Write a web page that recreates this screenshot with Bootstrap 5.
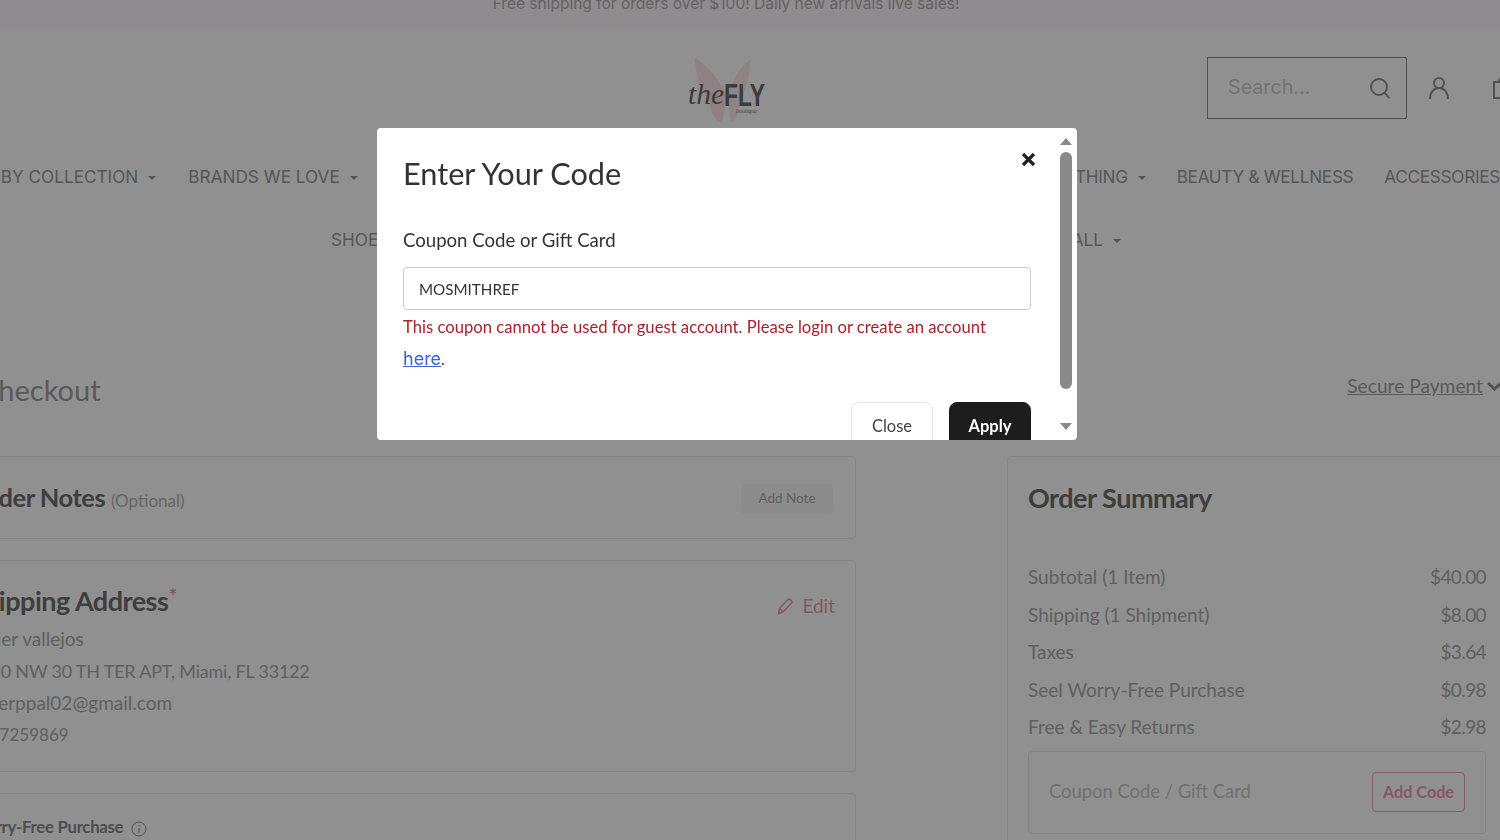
<!DOCTYPE html>
<html lang="en">
<head>
    <meta charset="UTF-8">
    <meta name="viewport" content="width=device-width, initial-scale=1.0">
    <title>Checkout</title>
    <link href="https://cdn.jsdelivr.net/npm/bootstrap@5.3.0/dist/css/bootstrap.min.css" rel="stylesheet">
    <style>
        html, body {
            height: 840px;
            overflow: hidden;
        }
        body {
            background-color: #fff;
            color: #333;
            font-family: "Lato", "Liberation Sans", sans-serif;
        }
        .promo-bar {
            height: 30px;
            background-color: #fff7fc;
            font-family: "Inter", sans-serif;
            font-size: 15.5px;
            line-height: 20px;
            color: #b0b0b0;
        }
        .promo-bar span {
            margin-top: -6px;
            margin-left: -48px;
        }
        .top-wrap {
            margin-left: -240px;
            width: 1932px;
        }
        .head-grid {
            display: grid;
            grid-template-columns: 1fr 100px 1fr;
            grid-template-rows: 62px;
            padding-top: 27px;
            height: 89px;
        }
        .brand-logo {
            width: 100px;
            height: 72px;
        }
        .head-tools {
            padding-left: 431px;
        }
        .search-box {
            width: 200px;
            height: 62px;
            border: 1px solid #909090;
            padding: 0 15px 0 20px;
            font-family: "Inter", sans-serif;
            font-size: 19.7px;
            color: #ccc;
        }
        .tool-icon {
            margin-left: 21px;
        }
        .bag-icon {
            margin-left: 41px;
        }
        .nav-line {
            font-family: "Inter", sans-serif;
            font-size: 17.2px;
            line-height: 27px;
            color: #9a9a9a;
            white-space: nowrap;
        }
        .nav-one {
            width: 1556px;
            margin: 44px auto 0;
        }
        .nav-left {
            gap: 32px;
        }
        .nav-right {
            gap: 31px;
            letter-spacing: -.3px;
            margin-right: 4px;
        }
        .nav-two {
            width: 790px;
            margin: 36px auto 0;
        }
        .nav-caret::after {
            content: "";
            display: inline-block;
            margin-left: 10px;
            vertical-align: 3px;
            border-top: 4px solid #9a9a9a;
            border-left: 4px solid transparent;
            border-right: 4px solid transparent;
        }
        .check-wrap {
            margin-left: -49px;
            width: 1556px;
        }
        .title-row {
            height: 83px;
            margin-top: 120px;
        }
        .check-title {
            font-size: 29px;
            font-weight: 400;
            color: #a0a0a0;
            margin: 0 0 0 28px;
            line-height: 40px;
            position: relative;
            top: -3px;
        }
        .secure-link {
            color: #a0a0a0;
            font-size: 19.2px;
            line-height: 26px;
            margin-right: 5px;
        }
        .left-col {
            width: 905px;
        }
        .right-col {
            width: 500px;
            margin-left: 151px;
        }
        .pane {
            border: 1px solid #ececec;
            border-radius: 4px;
            padding: 0 22px 0 18px;
            background-color: #fff;
        }
        .notes-pane {
            height: 83px;
            margin-bottom: 21px;
            padding-top: 2px;
        }
        .ship-pane {
            height: 212px;
            margin-bottom: 21px;
            padding-top: 18px;
            padding-right: 20px;
        }
        .ship-head {
            margin-bottom: 2px;
        }
        .worry-pane {
            height: 100px;
            padding-top: 20px;
        }
        .pane-head {
            font-size: 27px;
            font-weight: 700;
            line-height: 34px;
            color: #6e6e6e;
            letter-spacing: -.5px;
            margin: 0;
        }
        .notes-head {
            font-size: 25.5px;
        }
        .opt-note {
            font-size: 17px;
            font-weight: 400;
            color: #b5b5b5;
            letter-spacing: 0;
        }
        .note-btn {
            background-color: #f8f8f8;
            border: 0;
            border-radius: 4px;
            color: #aaa;
            font-size: 13.5px;
            width: 92px;
            height: 30px;
            padding: 0;
        }
        .star-mark {
            color: #e58aa0;
            font-size: 22px;
            font-weight: 400;
            vertical-align: 7px;
        }
        .edit-link {
            color: #e89db0;
            font-size: 19px;
            padding-top: 13px;
        }
        .addr-line {
            font-size: 19px;
            line-height: 32px;
            color: #aaa;
        }
        .addr-street {
            font-size: 18px;
            letter-spacing: -.2px;
        }
        .addr-phone {
            font-size: 17px;
        }
        .worry-head {
            font-size: 16.8px;
            font-weight: 700;
            color: #8a8a8a;
            letter-spacing: -.3px;
        }
        .sum-pane {
            height: 400px;
            padding: 24px 20px 0;
        }
        .sum-list {
            margin-top: 43px;
            font-size: 19px;
            color: #aaa;
        }
        .sum-list > div {
            height: 37.5px;
            line-height: 37.5px;
        }
        .sum-val {
            letter-spacing: -.6px;
        }
        .code-box {
            height: 83px;
            margin-top: 5px;
            border: 1px solid #ececec;
            border-radius: 4px;
            padding: 0 20px;
            font-size: 18.4px;
            color: #c8c8c8;
        }
        .code-btn {
            width: 93px;
            height: 40px;
            padding: 0;
            border: 1px solid #f0a5b8;
            border-radius: 4px;
            background: none;
            color: #f09ab5;
            font-size: 16.2px;
            font-weight: 700;
        }
        .modal-backdrop.show {
            opacity: .435;
        }
        .code-dialog {
            max-width: none;
            width: 700px;
            margin: 128px 0 0 377px;
        }
        .code-content {
            height: 312px;
            border: 0;
            border-radius: 4px;
            overflow: hidden;
            flex-direction: row;
        }
        .code-main {
            width: 680px;
            padding: 26px 0 0 26px;
            color: #333;
        }
        .code-title {
            font-size: 30.7px;
            line-height: 40px;
            margin: 0;
            font-weight: 400;
        }
        .close-x {
            position: absolute;
            left: 644px;
            top: 24px;
            border: 0;
            background: none;
            padding: 0;
            line-height: 0;
        }
        .code-label {
            display: block;
            font-size: 18.6px;
            line-height: 26px;
            margin: 33px 0 14px;
        }
        .code-input {
            width: 628px;
            height: 43px;
            padding: 0 15px;
            font-size: 15.2px;
            color: #333;
            border-color: #ccc;
            border-radius: 4px;
        }
        .code-error {
            width: 628px;
            margin: 2px 0 0;
            font-size: 16.65px;
            line-height: 31px;
            color: #a8222c;
        }
        .code-error a {
            font-family: "Inter", sans-serif;
            font-size: 18px;
            color: #3c63d8;
        }
        .code-actions {
            width: 628px;
            margin-top: 27px;
        }
        .close-action, .apply-action {
            width: 82px;
            height: 50px;
            font-size: 16.5px;
            border-radius: 8px;
            padding: 0 0 1px;
        }
        .close-action {
            background-color: #fff;
            border: 1px solid #e6e6e6;
            color: #444;
        }
        .apply-action {
            background-color: #1d1d1d;
            border: 1px solid #1d1d1d;
            color: #fff;
            font-weight: 700;
        }
        .scroll-col {
            width: 17px;
            padding-top: 10px;
        }
        .scroll-thumb {
            width: 12px;
            height: 237px;
            margin: 7px auto 34px;
            background-color: #8a8a8a;
            border-radius: 6px;
        }
    </style>
</head>
<body>
    <div class="promo-bar d-flex justify-content-center">
        <span>Free shipping for orders over $100! Daily new arrivals live sales!</span>
    </div>

    <div class="top-wrap">
        <div class="head-grid">
            <div></div>
            <svg class="brand-logo" viewBox="0 0 100 72">
                <path d="M19 1C30 8 44 20 50 40c-2 8-1 18-4 26-6-2-12-10-12-20-8-12-15-28-15-45z" fill="#ffe3e8"/>
                <path d="M74 3C64 10 56 22 52 40c1 8 1 18 3 26 5-3 9-10 8-20 7-12 11-27 11-43z" fill="#ffe8ec"/>
                <text x="12" y="47" font-family="Liberation Serif" font-style="italic" font-size="30" textLength="36" lengthAdjust="spacingAndGlyphs" fill="#6a6a6a">the</text>
                <text x="48" y="49" font-family="Liberation Sans" font-weight="700" font-size="32" textLength="41" lengthAdjust="spacingAndGlyphs" fill="#6a6a6a">FLY</text>
                <text x="60" y="56" font-family="Liberation Serif" font-style="italic" font-size="6" fill="#777">boutique</text>
            </svg>
            <div class="head-tools d-flex align-items-center">
                <div class="search-box d-flex align-items-center justify-content-between">
                    <span>Search...</span>
                    <svg width="22" height="22" viewBox="0 0 22 22" fill="none" stroke="#909090" stroke-width="2"><circle cx="10" cy="10" r="8"/><path d="M16 16l4 5"/></svg>
                </div>
                <svg class="tool-icon" width="22" height="24" viewBox="0 0 22 24" fill="none" stroke="#909090" stroke-width="2"><circle cx="11" cy="7" r="5"/><path d="M2 23c0-7 4-11 9-11s9 4 9 11"/></svg>
                <svg class="bag-icon" width="24" height="24" viewBox="0 0 24 24" fill="none" stroke="#909090" stroke-width="2"><rect x="3" y="6" width="18" height="16"/><path d="M8 6c0-6 8-6 8 0"/></svg>
            </div>
        </div>
        <div class="nav-line nav-one d-flex justify-content-between">
            <div class="nav-left d-flex">
                <span class="nav-caret">SHOP BY COLLECTION</span>
                <span class="nav-caret">BRANDS WE LOVE</span>
            </div>
            <div class="nav-right d-flex">
                <span class="nav-caret">CLOTHING</span>
                <span>BEAUTY &amp; WELLNESS</span>
                <span>ACCESSORIES</span>
            </div>
        </div>
        <div class="nav-line nav-two d-flex justify-content-between">
            <span>SHOES</span>
            <span class="nav-caret">SALE ALL</span>
        </div>
    </div>

    <div class="check-wrap">
        <div class="title-row d-flex justify-content-between align-items-start">
            <h1 class="check-title">Checkout</h1>
            <a href="#" class="secure-link d-flex align-items-center">
                <span>Secure Payment</span>
                <svg class="ms-1" width="15" height="10" viewBox="0 0 15 10" fill="none" stroke="#909090" stroke-width="3"><path d="M1 2l6.500 6L14 2"/></svg>
            </a>
        </div>
        <div class="d-flex align-items-start">
            <div class="left-col">
                <div class="pane notes-pane d-flex justify-content-between align-items-center">
                    <h2 class="pane-head notes-head">Order Notes <span class="opt-note">(Optional)</span></h2>
                    <button class="note-btn" type="button">Add Note</button>
                </div>
                <div class="pane ship-pane">
                    <div class="ship-head d-flex justify-content-between align-items-start">
                        <h2 class="pane-head">Shipping Address<span class="star-mark">*</span></h2>
                        <div class="edit-link d-flex align-items-center gap-2">
                            <svg width="17" height="18" viewBox="0 0 17 18" fill="none" stroke="#e89db0" stroke-width="1.500"><path d="M1.500 16.500l1-5L11 2.500c1.500-1.500 5 1.500 3.500 3.500L6 14.800zM2.500 11.500l3.500 3.300"/></svg>
                            <span>Edit</span>
                        </div>
                    </div>
                    <div class="addr-line">Javier vallejos</div>
                    <div class="addr-line addr-street">1230 NW 30 TH TER APT, Miami, FL 33122</div>
                    <div class="addr-line">javierppal02@gmail.com</div>
                    <div class="addr-line addr-phone">3057259869</div>
                </div>
                <div class="pane worry-pane">
                    <span class="worry-head">Worry-Free Purchase</span>
                    <svg class="ms-1" width="16" height="16" viewBox="0 0 16 16" fill="none" stroke="#909090"><circle cx="8" cy="8" r="7"/><path d="M8 7v5M8 4v1.500"/></svg>
                </div>
            </div>
            <div class="right-col">
                <div class="pane sum-pane">
                    <h2 class="pane-head">Order Summary</h2>
                    <div class="sum-list">
                        <div class="d-flex justify-content-between"><span>Subtotal (1 Item)</span><span class="sum-val">$40.00</span></div>
                        <div class="d-flex justify-content-between"><span>Shipping (1 Shipment)</span><span class="sum-val">$8.00</span></div>
                        <div class="d-flex justify-content-between"><span>Taxes</span><span class="sum-val">$3.64</span></div>
                        <div class="d-flex justify-content-between"><span>Seel Worry-Free Purchase</span><span class="sum-val">$0.98</span></div>
                        <div class="d-flex justify-content-between"><span>Free &amp; Easy Returns</span><span class="sum-val">$2.98</span></div>
                    </div>
                    <div class="code-box d-flex justify-content-between align-items-center">
                        <span>Coupon Code / Gift Card</span>
                        <button class="code-btn" type="button">Add Code</button>
                    </div>
                </div>
            </div>
        </div>
    </div>

    <div class="modal-backdrop show"></div>
    <div class="modal d-block">
        <div class="modal-dialog code-dialog">
            <div class="modal-content code-content">
                <div class="code-main">
                    <h5 class="code-title">Enter Your Code</h5>
                    <button class="close-x" type="button" aria-label="Close">
                        <svg width="15" height="15" viewBox="0 0 15 15" fill="none" stroke="#222" stroke-width="3.200"><path d="M2 2l11 11M13 2L2 13"/></svg>
                    </button>
                    <label class="code-label" for="couponCode">Coupon Code or Gift Card</label>
                    <input id="couponCode" class="form-control code-input" type="text" value="MOSMITHREF">
                    <p class="code-error">This coupon cannot be used for guest account. Please login or create an account <a href="#">here</a>.</p>
                    <div class="code-actions d-flex justify-content-end gap-3">
                        <button class="btn close-action" type="button">Close</button>
                        <button class="btn apply-action" type="button">Apply</button>
                    </div>
                </div>
                <div class="scroll-col">
                    <svg class="d-block mx-auto" width="12" height="7" viewBox="0 0 12 7"><path d="M6 0l6 7H0z" fill="#8a8a8a"/></svg>
                    <div class="scroll-thumb"></div>
                    <svg class="d-block mx-auto" width="12" height="7" viewBox="0 0 12 7"><path d="M0 0h12L6 7z" fill="#8a8a8a"/></svg>
                </div>
            </div>
        </div>
    </div>

    <script src="https://cdn.jsdelivr.net/npm/bootstrap@5.3.0/dist/js/bootstrap.bundle.min.js"></script>
</body>
</html>
